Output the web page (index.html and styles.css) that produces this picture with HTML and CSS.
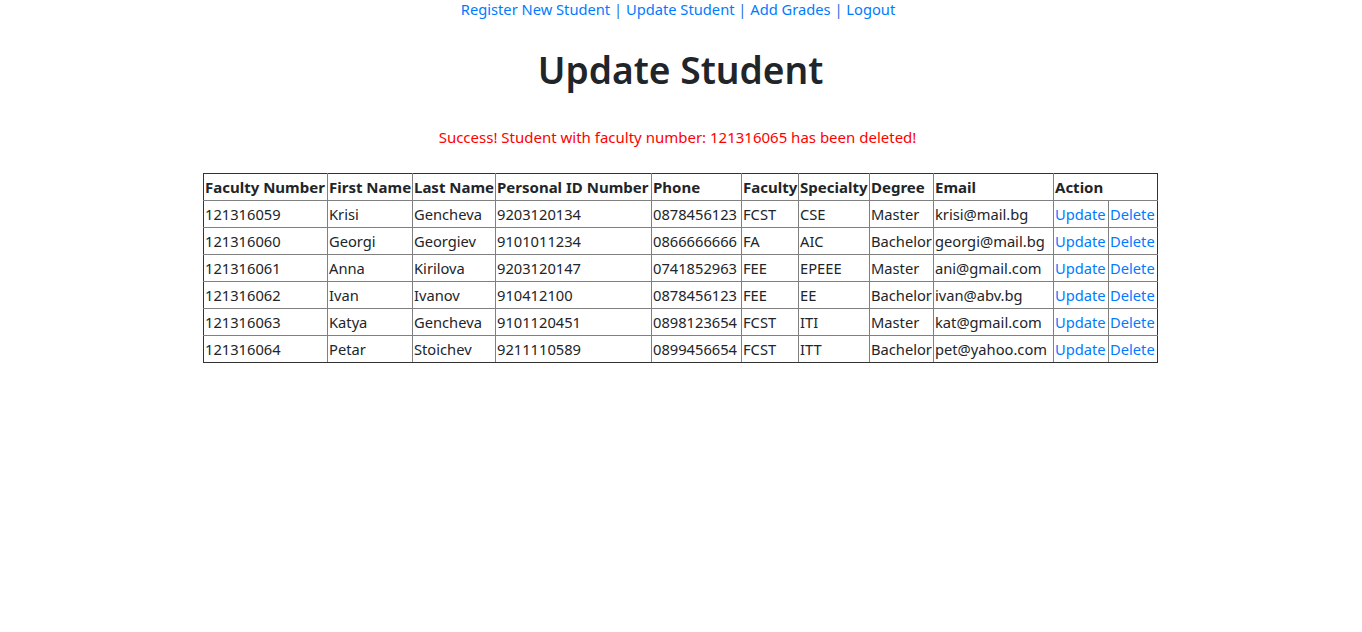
FILE: index.html
```html
<!DOCTYPE html>
<html lang="en">
<head>
<meta charset="utf-8">
<title>Update Student</title>
<link rel="stylesheet" href="styles.css">
</head>
<body>
<nav class="topnav">
  <a href="#">Register New Student</a> <span class="sep">|</span> <a href="#">Update Student</a> <span class="sep">|</span> <a href="#">Add Grades</a> <span class="sep">|</span> <a href="#">Logout</a>
</nav>
<h1 class="title">Update Student</h1>
<p class="message">Success! Student with faculty number: 121316065 has been deleted!</p>
<table class="students">
  <colgroup>
    <col class="c1"><col class="c2"><col class="c3"><col class="c4"><col class="c5"><col class="c6"><col class="c7"><col class="c8"><col class="c9"><col class="c10"><col class="c11">
  </colgroup>
  <thead>
    <tr>
      <th>Faculty Number</th><th>First Name</th><th>Last Name</th><th>Personal ID Number</th><th>Phone</th><th>Faculty</th><th>Specialty</th><th>Degree</th><th>Email</th><th colspan="2">Action</th>
    </tr>
  </thead>
  <tbody>
    <tr><td>121316059</td><td>Krisi</td><td>Gencheva</td><td>9203120134</td><td>0878456123</td><td>FCST</td><td>CSE</td><td>Master</td><td>krisi@mail.bg</td><td><a href="#">Update</a></td><td><a href="#">Delete</a></td></tr>
    <tr><td>121316060</td><td>Georgi</td><td>Georgiev</td><td>9101011234</td><td>0866666666</td><td>FA</td><td>AIC</td><td>Bachelor</td><td>georgi@mail.bg</td><td><a href="#">Update</a></td><td><a href="#">Delete</a></td></tr>
    <tr><td>121316061</td><td>Anna</td><td>Kirilova</td><td>9203120147</td><td>0741852963</td><td>FEE</td><td>EPEEE</td><td>Master</td><td>ani@gmail.com</td><td><a href="#">Update</a></td><td><a href="#">Delete</a></td></tr>
    <tr><td>121316062</td><td>Ivan</td><td>Ivanov</td><td>910412100</td><td>0878456123</td><td>FEE</td><td>EE</td><td>Bachelor</td><td>ivan@abv.bg</td><td><a href="#">Update</a></td><td><a href="#">Delete</a></td></tr>
    <tr><td>121316063</td><td>Katya</td><td>Gencheva</td><td>9101120451</td><td>0898123654</td><td>FCST</td><td>ITI</td><td>Master</td><td>kat@gmail.com</td><td><a href="#">Update</a></td><td><a href="#">Delete</a></td></tr>
    <tr><td>121316064</td><td>Petar</td><td>Stoichev</td><td>9211110589</td><td>0899456654</td><td>FCST</td><td>ITT</td><td>Bachelor</td><td>pet@yahoo.com</td><td><a href="#">Update</a></td><td><a href="#">Delete</a></td></tr>
  </tbody>
</table>
</body>
</html>
```
FILE: styles.css
```css
html, body {
  margin: 0;
  padding: 0;
  background: #fff;
}
body {
  font-family: "Noto Sans", "Open Sans", sans-serif;
  font-size: 15px;
  line-height: 24px;
  color: #212529;
}
a {
  color: #007bff;
  text-decoration: none;
}
.topnav {
  text-align: center;
  height: 24px;
  line-height: 19px;
  font-size: 14.7px;
  padding-right: 6px;
}
.topnav .sep {
  color: #2a6fe0;
}
.title {
  margin: 22px 0 0;
  text-align: center;
  font-size: 37.2px;
  font-weight: 600;
  line-height: 48px;
  height: 48px;
  padding-right: 1px;
}
.message {
  margin: 31px 0 0;
  text-align: center;
  color: #ff0000;
  line-height: 24px;
  padding-right: 7px;
}
.students {
  margin: 24px 0 0 calc(50% - 478px);
  width: 954px;
  table-layout: fixed;
  border-collapse: collapse;
  border: 1px solid #333;
}
.students th,
.students td {
  border: 1px solid #808080;
  padding: 1px 1px;
  text-align: left;
  white-space: nowrap;
  overflow: visible;
  line-height: 24px;
  height: 24px;
}
.students td {
  font-size: 14.7px;
}
.students th {
  font-weight: 700;
}
.students tr:first-child th { border-top-color: #333; }
.students tr:last-child td { border-bottom-color: #333; }
.students tr > :first-child { border-left-color: #333; }
.students tr > :last-child { border-right-color: #333; }
.c1 { width: 124px; }
.c2 { width: 85px; }
.c3 { width: 83px; }
.c4 { width: 156px; }
.c5 { width: 90px; }
.c6 { width: 57px; }
.c7 { width: 71px; }
.c8 { width: 64px; }
.c9 { width: 120px; }
.c10 { width: 55px; }
.c11 { width: 49px; }
```
